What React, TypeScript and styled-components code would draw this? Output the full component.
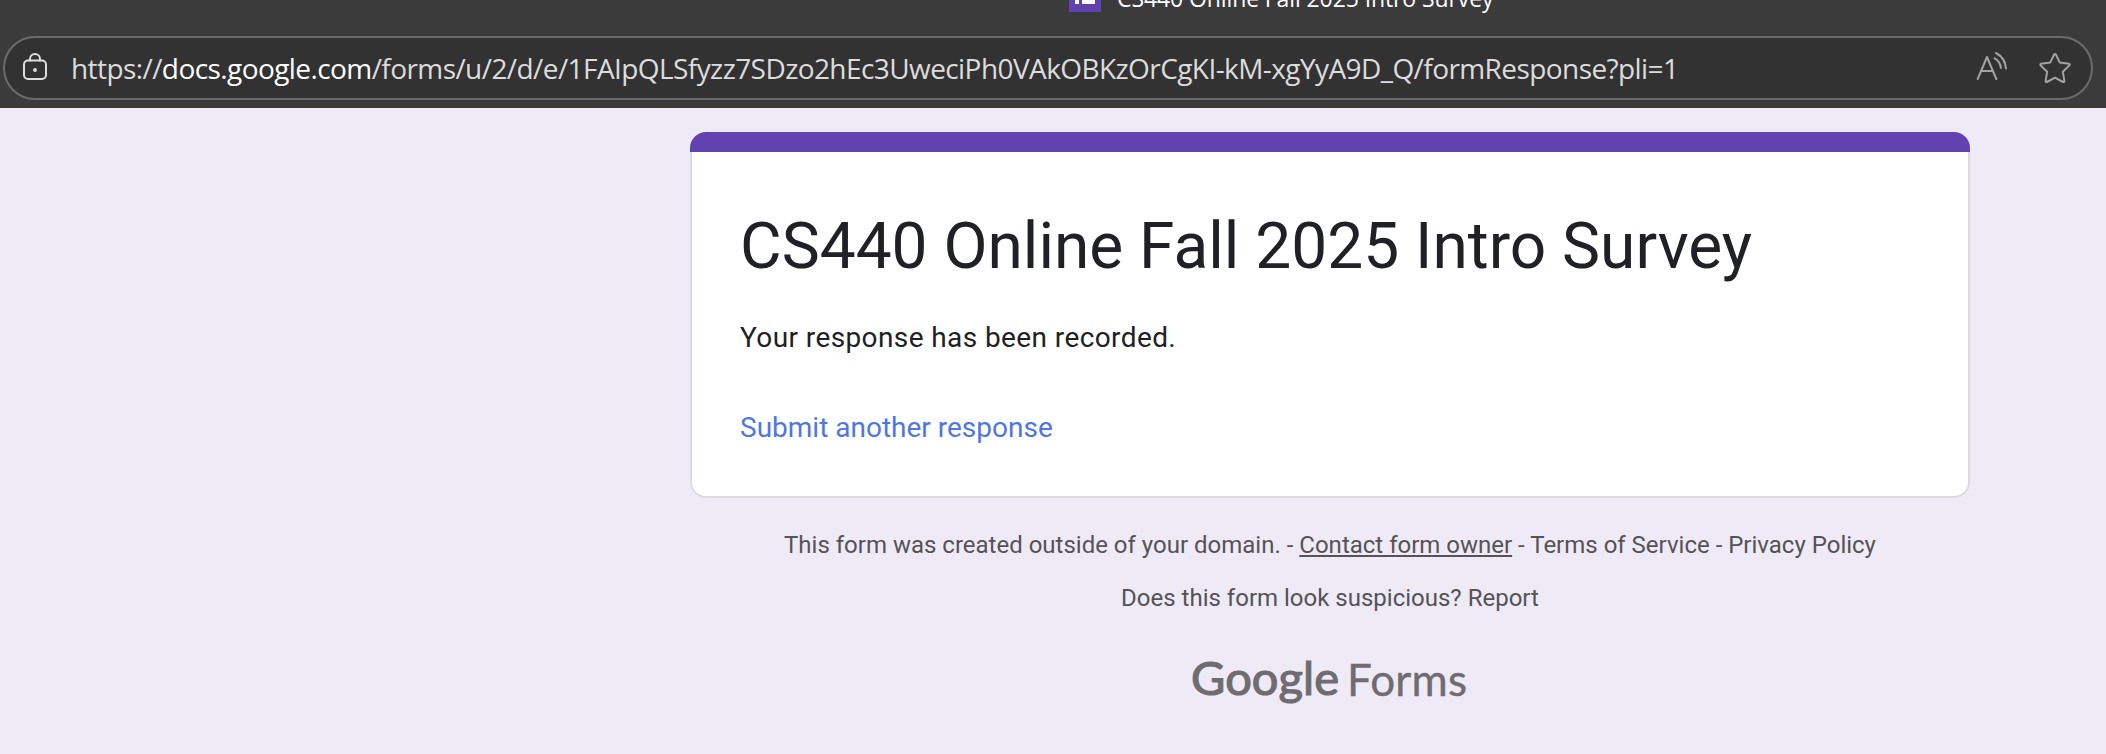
import React from 'react';
import styled, { createGlobalStyle } from 'styled-components';

const Global = createGlobalStyle`
  * { box-sizing: border-box; }
  body { margin: 0; background: #efebf6; overflow: hidden; }
`;

const Page = styled.div`
  height: 754px;
  display: flex;
  flex-direction: column;
  overflow: hidden;
  font-family: Roboto, sans-serif;
`;

const Chrome = styled.header`
  height: 108px;
  flex: none;
  background: #3b3b3b;
  display: flex;
  flex-direction: column;
  overflow: hidden;
  font-family: "Open Sans", "Noto Sans", sans-serif;
`;

const TabStrip = styled.div`
  height: 36px;
  flex: none;
  overflow: hidden;
  display: flex;
  align-items: flex-end;
  padding-left: 1069px;
  gap: 16px;
  color: #fff;
`;

const Favicon = styled.svg`
  width: 32px;
  height: 32px;
  margin-bottom: 24px;
  flex: none;
`;

const TabTitle = styled.span`
  font-size: 23px;
  line-height: 32px;
  letter-spacing: -0.1px;
  margin-bottom: 22px;
  white-space: nowrap;
`;

const AddressBar = styled.div`
  height: 64px;
  margin: 0 13px 0 3px;
  flex: none;
  border: 2px solid #6b6b6b;
  border-radius: 32px;
  background: #323232;
  display: flex;
  align-items: center;
  padding: 0 20px 0 16px;
`;

const Url = styled.div`
  flex: 1;
  margin-left: 18px;
  font-size: 28px;
  line-height: 38px;
  letter-spacing: -0.58px;
  padding-bottom: 1px;
  color: #dcdcdc;
  white-space: nowrap;
`;

const Host = styled.span`
  color: #fff;
`;

const BarIcon = styled.svg<{ $color: string; $gap?: number }>`
  width: 32px;
  height: 36px;
  margin-left: ${(p) => p.$gap ?? 0}px;
  flex: none;
  fill: none;
  stroke: ${(p) => p.$color};
  stroke-width: 2;
  stroke-linecap: round;
  stroke-linejoin: round;
`;

const Main = styled.main`
  padding: 24px 136px 0 690px;
  display: flex;
  flex-direction: column;
`;

const Card = styled.section`
  height: 366px;
  display: flex;
  flex-direction: column;
`;

const CardStripe = styled.div`
  height: 20px;
  flex: none;
  border-radius: 16px 16px 0 0;
  background: #6242b0;
`;

const CardBody = styled.div`
  flex: 1;
  padding: 0 48px;
  border: 2px solid #dcdbe2;
  border-top: 0;
  border-radius: 0 0 16px 16px;
  background: #fff;
`;

const Title = styled.h1`
  margin: 0;
  padding-top: 52px;
  font-size: 64px;
  line-height: 86px;
  font-weight: 400;
  color: #202124;
  white-space: nowrap;
`;

const Message = styled.p`
  margin: 28px 0 0;
  font-size: 28px;
  line-height: 40px;
  letter-spacing: 0.4px;
  color: #202124;
`;

const SubmitLink = styled.a`
  display: block;
  margin-top: 50px;
  font-size: 28px;
  line-height: 40px;
  color: #5076e2;
`;

const Footer = styled.footer`
  display: flex;
  flex-direction: column;
  align-items: center;
  padding-top: 31px;
  font-size: 24px;
  line-height: 32px;
  color: #555356;
`;

const Note = styled.p<{ $gap?: number }>`
  margin: ${(p) => p.$gap ?? 0}px 0 0;
  white-space: nowrap;
`;

const OwnerLink = styled.a`
  text-decoration: underline;
  text-decoration-thickness: 2px;
  text-underline-offset: 2px;
`;

const Logo = styled.svg`
  width: 278px;
  height: 60px;
  margin-top: 36px;
  fill: #6f6c72;
  stroke: #6f6c72;
  font-family: Lato, sans-serif;
`;

export default function App() {
  return (
    <Page>
      <Global />
      <Chrome>
        <TabStrip>
          <Favicon viewBox="0 0 32 32">
            <path fill="#6242b0" d="M0 0h32v32H0z" />
            <path fill="#fff" d="M6 20h4v4H6zM13 20h13v4H13zM6 13h4v4H6zM13 13h13v4H13zM6 6h4v4H6zM13 6h13v4H13z" />
          </Favicon>
          <TabTitle>CS440 Online Fall 2025 Intro Survey</TabTitle>
        </TabStrip>
        <AddressBar>
          <BarIcon $color="#dedede" viewBox="0 0 32 36">
            <rect x="3" y="10.5" width="22" height="18.5" rx="4" />
            <path d="M9 10.5V9a5 5 0 0 1 10 0v1.5" />
            <circle cx="14" cy="20" r="1.2" fill="#dedede" strokeWidth="1.4" />
          </BarIcon>
          <Url>
            https://<Host>docs.google.com</Host>
            /forms/u/2/d/e/1FAIpQLSfyzz7SDzo2hEc3UweciPh0VAkOBKzOrCgKI-kM-xgYyA9D_Q/formResponse?pli=1
          </Url>
          <BarIcon $color="#a2a2a2" viewBox="0 0 32 36">
            <path d="M2.7 29 12 7l9.3 22M6 21h12M19.7 8.3c3.4 1.9 5.6 5.2 6.2 9.6M21 3c5.8 3 9.3 8 10 15.5" />
          </BarIcon>
          <BarIcon $color="#a2a2a2" $gap={32} viewBox="0 0 32 36">
            <path d="M15.1 4.5a1 1 0 0 1 1.8 0l3.8 7.9 9.2 1.3a1 1 0 0 1 .5 1.7l-6.6 6.3 1.6 9.2a1 1 0 0 1-1.4 1.1L16 27.7 8 32a1 1 0 0 1-1.4-1.1l1.6-9.2-6.6-6.3a1 1 0 0 1 .5-1.7l9.2-1.3z" />
          </BarIcon>
        </AddressBar>
      </Chrome>
      <Main>
        <Card>
          <CardStripe />
          <CardBody>
            <Title>CS440 Online Fall 2025 Intro Survey</Title>
            <Message>Your response has been recorded.</Message>
            <SubmitLink>Submit another response</SubmitLink>
          </CardBody>
        </Card>
        <Footer>
          <Note>
            This form was created outside of your domain. - <OwnerLink>Contact form owner</OwnerLink> - Terms of Service - Privacy Policy
          </Note>
          <Note $gap={21}>Does this form look suspicious? Report</Note>
          <Logo viewBox="0 0 278 60">
            <text x="0" y="45" fontSize="47" strokeWidth="1.2" textLength="148">Google</text>
            <text x="156" y="45.5" fontSize="44" strokeWidth="0.4" textLength="120">Forms</text>
          </Logo>
        </Footer>
      </Main>
    </Page>
  );
}
